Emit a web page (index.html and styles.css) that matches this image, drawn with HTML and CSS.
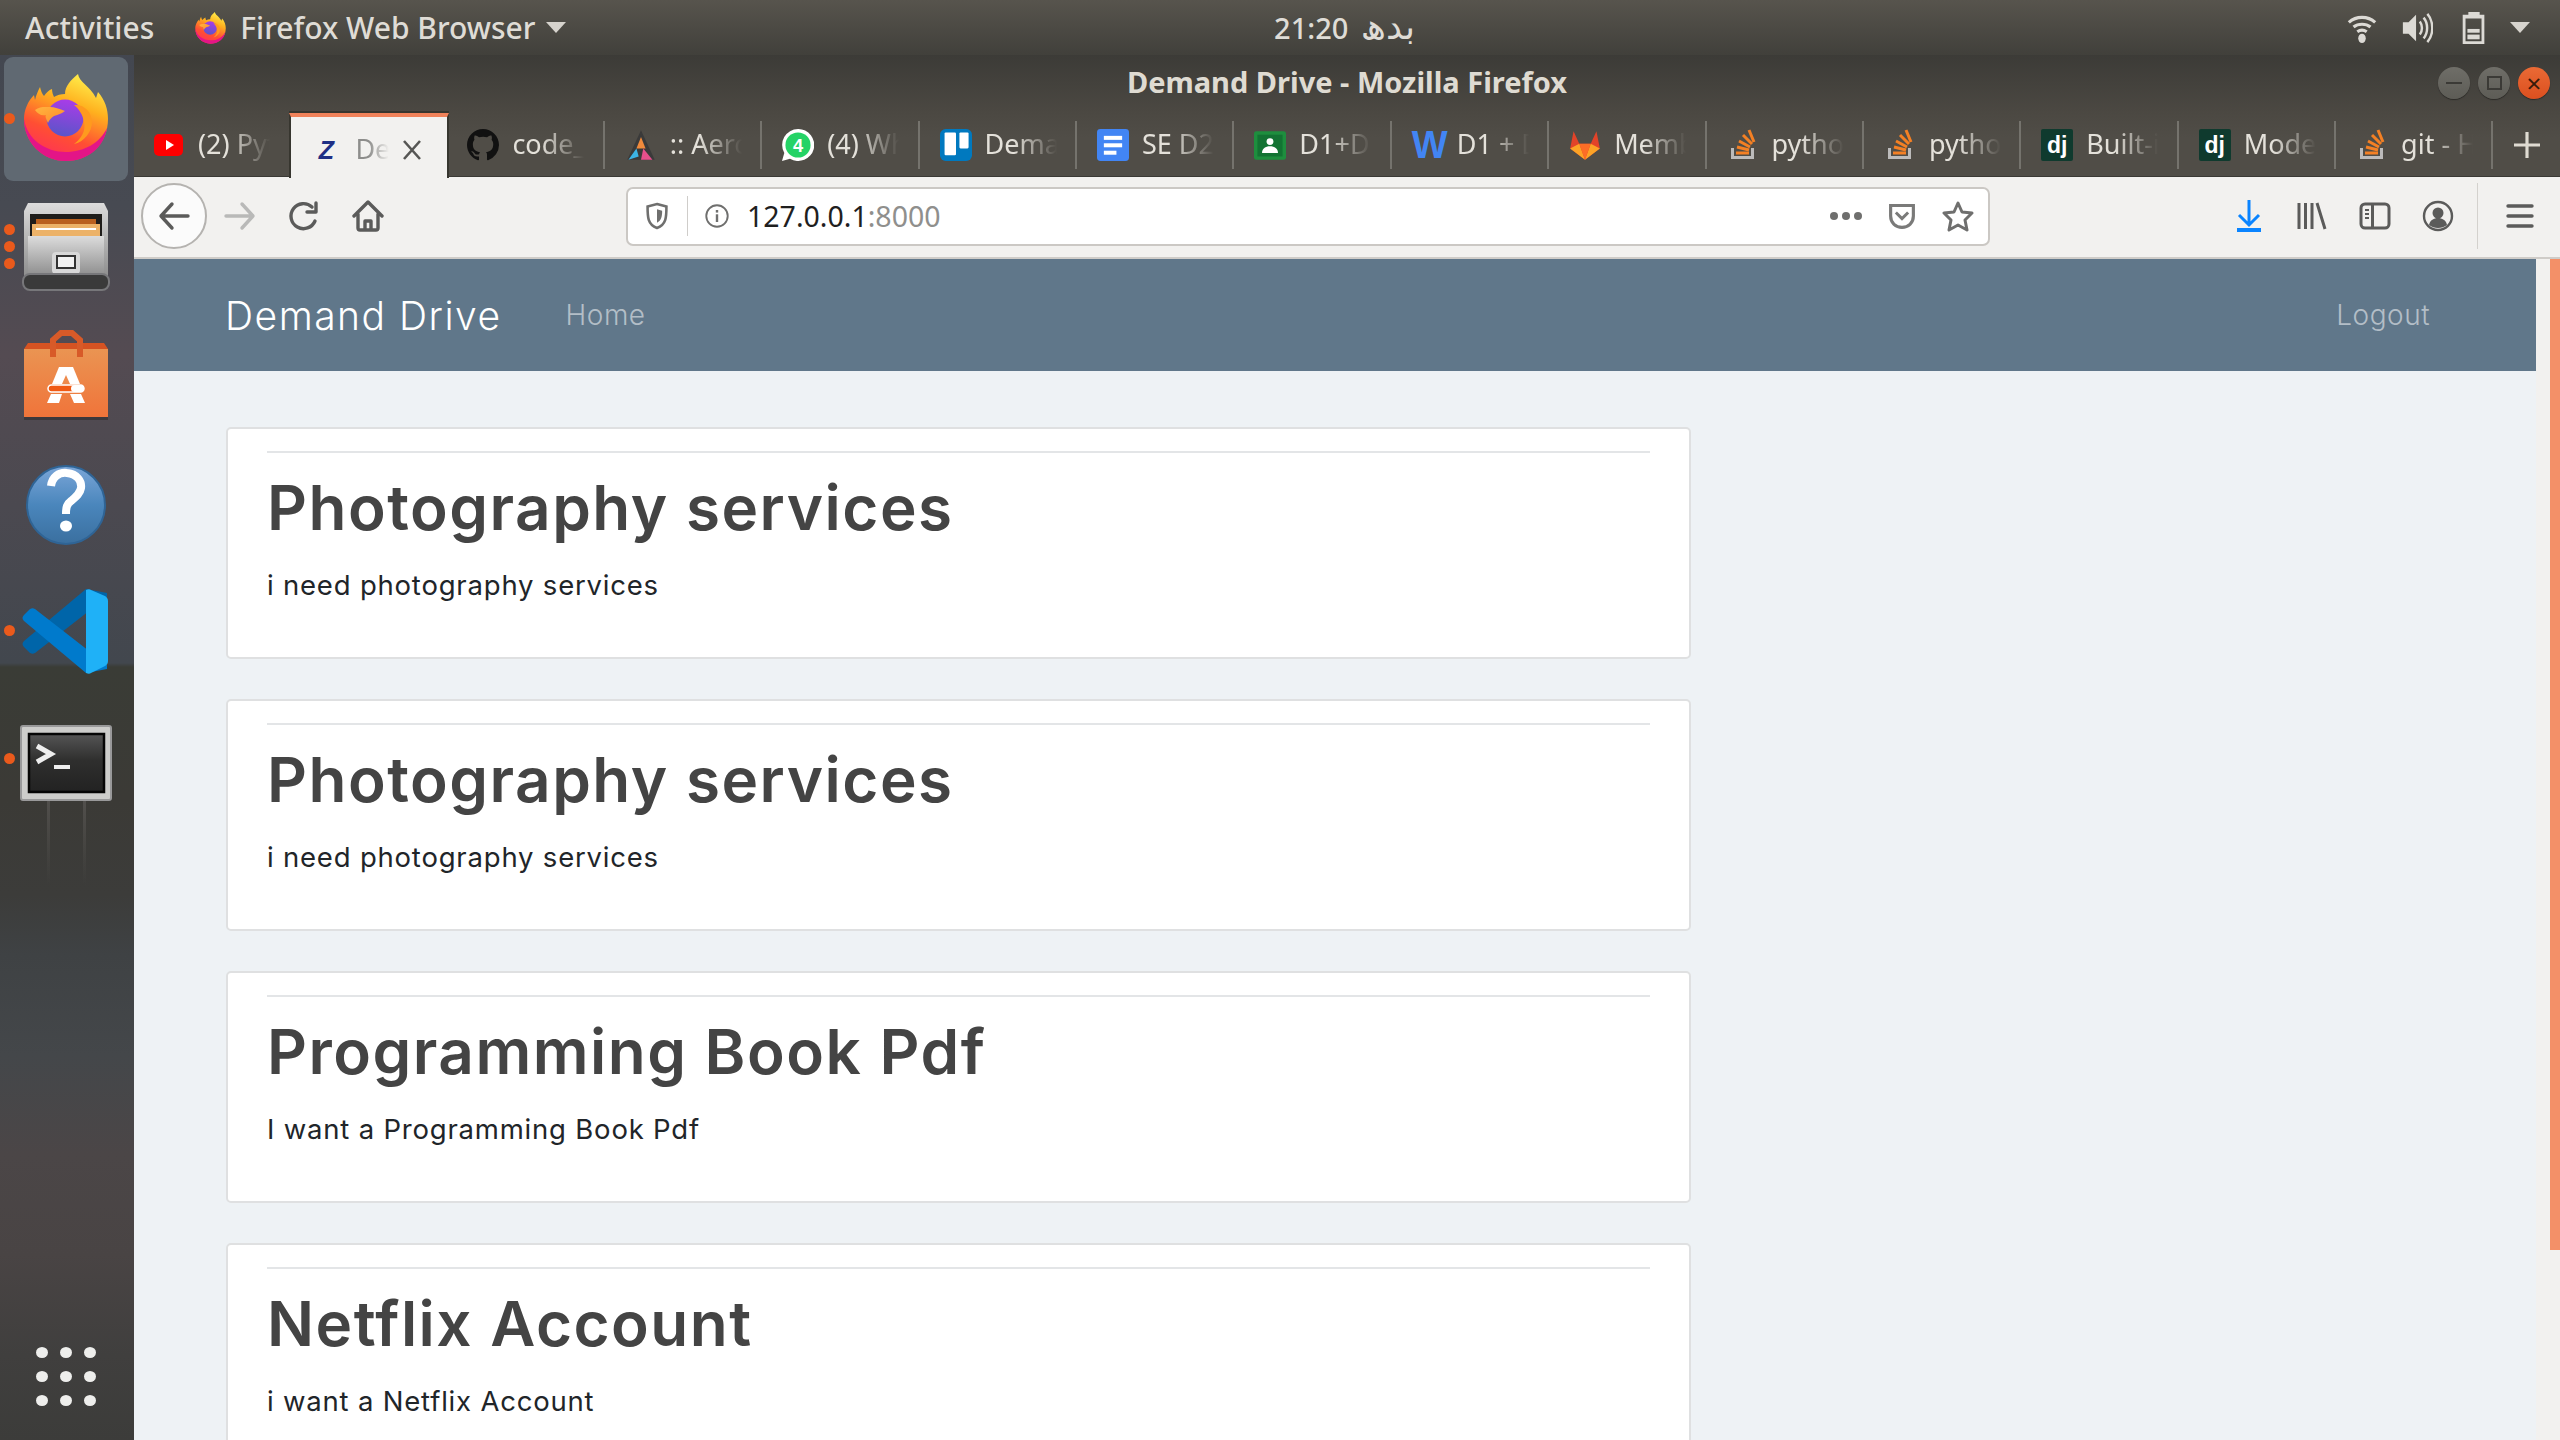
FILE: index.html
```html
<!DOCTYPE HTML>
<html>

<head>
    <meta charset="utf-8">
    <title>Demand Drive - Mozilla Firefox</title>
    <link rel="stylesheet" href="styles.css">
</head>

<body>
    <svg class="sprite" width="0" height="0">
        <defs>
            <linearGradient id="ffFlame" x1="0.75" y1="0" x2="0.35" y2="1">
                <stop offset="0" stop-color="#fff44f"/>
                <stop offset="0.35" stop-color="#ffb01e"/>
                <stop offset="0.7" stop-color="#ff4f33"/>
                <stop offset="1" stop-color="#ff3058"/>
            </linearGradient>
            <linearGradient id="ffGlobe" x1="0.6" y1="0" x2="0.4" y2="1">
                <stop offset="0" stop-color="#a93ce8"/>
                <stop offset="1" stop-color="#5a55c8"/>
            </linearGradient>
            <linearGradient id="ffFox" x1="0" y1="0" x2="1" y2="1">
                <stop offset="0" stop-color="#ffb53f"/>
                <stop offset="1" stop-color="#ff8a2a"/>
            </linearGradient>
            <symbol id="firefox" viewBox="0 0 84 88">
                <path fill="url(#ffFlame)" d="M54 0c1 8 12 12 18 24l2-6c7 8 10 17 10 27 0 25-19 42-42 42C18 87 0 68 0 45c0-9 4-18 10-24l1 5c1-5 3-9 5-13 1 4 2 7 4 9 2-3 5-6 8-7 0 3 1 6 2 8 3-2 7-3 11-3 0-8 6-14 13-20z"/>
                <path fill="#e31587" d="M0 45c3 20 21 33 42 33 18 0 34-9 41-24-3 20-20 33-41 33C18 87 0 68 0 45z"/>
                <circle fill="url(#ffGlobe)" cx="41" cy="44" r="18.500"/>
                <path fill="url(#ffFox)" d="M11 36c5-4 11-3 15-3 4 0 10 2 15 4-4 3-8 4-11 5-3 2-5 4-6 7-2-4-3-7-2-8-5 1-8-1-11-5z"/>
                <path fill="#ff9a1e" d="M50 31c10-1 18 7 18 17 0 10-8 20-18 22 8-6 12-14 10-22-1-7-5-13-10-17z"/>
            </symbol>
            <symbol id="stack" viewBox="0 0 32 32">
                <path fill="#bcbbbb" d="M4 19h3v8h17v-8h3v11H4z"/>
                <g stroke="#f48024" stroke-width="3" fill="none">
                    <path d="M9 24h13"/>
                    <path d="M10 18l12 3"/>
                    <path d="M12 12l11 6"/>
                    <path d="M16 6l9 9"/>
                    <path d="M22 1l5 12"/>
                </g>
            </symbol>
        </defs>
    </svg>

    <div class="topbar">
        <div class="topLeft">
            <span class="activities">Activities</span>
            <svg class="topFox"><use href="#firefox"/></svg>
            <span>Firefox Web Browser</span>
            <span class="caret"></span>
        </div>
        <div class="clock">21:20 <span class="urdu">بدھ</span></div>
        <div class="topRight">
            <svg class="trayIcon" viewBox="0 0 34 34">
                <g fill="none" stroke="#dcdad5" stroke-width="3.4">
                    <path d="M3 11c8-7 20-7 28 0"/>
                    <path d="M8 16c5-4 13-4 18 0"/>
                    <path d="M12 21c3-2 7-2 10 0"/>
                </g>
                <ellipse cx="17" cy="28" rx="4" ry="5" fill="#dcdad5"/>
            </svg>
            <svg class="trayIcon" viewBox="0 0 34 34">
                <path fill="#dcdad5" d="M2 11h6l8-8v28l-8-8H2z"/>
                <g fill="none" stroke="#dcdad5" stroke-width="2.6">
                    <path d="M20 10c3 4 3 10 0 14"/>
                    <path d="M24 6c5 6 5 16 0 22"/>
                    <path d="M28 2c7 8 7 22 0 30"/>
                </g>
            </svg>
            <svg class="trayIcon battery" viewBox="0 0 34 34">
                <path fill="#dcdad5" d="M11 0h12v3h5v31H5V3h6zM8 7v24h17V7z"/>
                <rect x="10" y="18" width="13" height="4" fill="#dcdad5"/>
                <rect x="10" y="24" width="13" height="5" fill="#dcdad5"/>
            </svg>
            <span class="caret"></span>
        </div>
    </div>

    <div class="desktop">
        <div class="dock">
            <div class="dockItem active">
                <i class="dot"></i>
                <svg class="dockIcon" viewBox="0 0 124 124"><use href="#firefox" x="20" y="17" width="84" height="88"/></svg>
            </div>
            <div class="dockItem files">
                <i class="dot one"></i><i class="dot two"></i><i class="dot three"></i>
                <svg class="dockIcon" viewBox="0 0 124 124">
                    <defs>
                        <linearGradient id="cab" x1="0" y1="0" x2="0" y2="1">
                            <stop offset="0" stop-color="#dcdcdc"/>
                            <stop offset="1" stop-color="#8d8d8d"/>
                        </linearGradient>
                    </defs>
                    <path fill="url(#cab)" d="M24 17h76l4 8v66H20V25z"/>
                    <rect x="26" y="28" width="72" height="26" fill="#1f1d1b"/>
                    <rect x="32" y="33" width="60" height="20" fill="#b9601f"/>
                    <rect x="28" y="38" width="68" height="15" fill="#ecb268"/>
                    <rect x="32" y="42" width="60" height="2" fill="#fff"/>
                    <rect x="24" y="50" width="76" height="40" fill="url(#cab)"/>
                    <rect x="48" y="66" width="28" height="22" rx="4" fill="#d8d8d8"/>
                    <rect x="53" y="70" width="18" height="12" fill="#f2f2f2" stroke="#333" stroke-width="2"/>
                    <rect x="19" y="88" width="86" height="16" rx="7" fill="#3a3a3a" stroke="#77777a" stroke-width="2"/>
                </svg>
            </div>
            <div class="dockItem">
                <svg class="dockIcon" viewBox="0 0 124 124">
                    <defs>
                        <linearGradient id="bag" x1="0" y1="0" x2="0" y2="1">
                            <stop offset="0" stop-color="#ea9452"/>
                            <stop offset="1" stop-color="#f0743a"/>
                        </linearGradient>
                    </defs>
                    <path fill="#d65322" d="M24 28h76l4 6H20z"/>
                    <path fill="none" stroke="#d85a28" stroke-width="6" d="M49 42V25l8-7h11l8 7v17"/>
                    <path fill="url(#bag)" d="M20 34h84v68H20z"/>
                    <path fill="#d85a28" d="M46 30h6v12h-6zM73 30h6v12h-6z"/>
                    <path fill="#fff" d="M55 52h14l7 17H48z"/>
                    <path fill="#ee8a4c" d="M62 60l4 9h-8z"/>
                    <rect x="44" y="70" width="36" height="7" rx="3.500" fill="#f05a14" stroke="#fff" stroke-width="1.500"/>
                    <rect x="67" y="70" width="13" height="7" rx="3.500" fill="#fff"/>
                    <path fill="#fff" d="M47 79h11l-3 9H43zM66 79h11l4 9H70z"/>
                    <rect x="20" y="102" width="84" height="3" fill="#2a2625" opacity="0.5"/>
                </svg>
            </div>
            <div class="dockItem">
                <svg class="dockIcon" viewBox="0 0 124 124">
                    <defs>
                        <linearGradient id="help" x1="0" y1="0" x2="0" y2="1">
                            <stop offset="0" stop-color="#7ba6d8"/>
                            <stop offset="0.5" stop-color="#4a86bc"/>
                            <stop offset="1" stop-color="#3a6f9f"/>
                        </linearGradient>
                    </defs>
                    <circle cx="62" cy="61" r="39" fill="url(#help)" stroke="#2f6495" stroke-width="2"/>
                    <path fill="none" stroke="#fff" stroke-width="8" d="M47 42c1-9 8-14 16-13 10 1 15 8 14 15-1 6-5 9-10 13-4 3-5 6-5 13"/>
                    <ellipse cx="62" cy="82" rx="6" ry="5.500" fill="#fff"/>
                </svg>
            </div>
            <div class="dockItem code">
                <i class="dot"></i>
                <svg class="dockIcon" viewBox="0 0 124 124">
                    <path fill="#0065a9" d="M82 16L20 68c-2 2-2 4 0 6l6 6c2 1 3 1 5 0l72-56v-4z"/>
                    <path fill="#007acc" d="M82 100L20 48c-2-2-2-4 0-6l6-6c2-1 3-1 5 0l72 56v4z"/>
                    <path fill="#1fb1f7" d="M82 100c2 1 4 1 5 0l14-7c2-1 3-3 3-5V28c0-2-1-4-3-5l-14-6c-1-1-3-1-5 0z"/>
                </svg>
            </div>
            <div class="dockItem term">
                <i class="dot"></i>
                <svg class="dockIcon" viewBox="0 0 124 124">
                    <defs>
                        <linearGradient id="termBg" x1="0" y1="0" x2="0" y2="1">
                            <stop offset="0" stop-color="#555"/>
                            <stop offset="0.45" stop-color="#2f2f2e"/>
                            <stop offset="1" stop-color="#222"/>
                        </linearGradient>
                    </defs>
                    <rect x="17" y="24" width="90" height="74" rx="2" fill="#cdcdcb" stroke="#99999a" stroke-width="2"/>
                    <rect x="25" y="32" width="75" height="58" fill="url(#termBg)" stroke="#050505" stroke-width="2.500"/>
                    <path fill="none" stroke="#eee" stroke-width="5" d="M33 44l14 8-14 8"/>
                    <rect x="50" y="63" width="16" height="4" fill="#eee"/>
                </svg>
            </div>
            <div class="appGrid">
                <i></i><i></i><i></i><i></i><i></i><i></i><i></i><i></i><i></i>
            </div>
        </div>

        <div class="window">
            <div class="titlebar">
                <span class="windowTitle">Demand Drive - Mozilla Firefox</span>
                <div class="windowButtons">
                    <span class="winBtn"><b class="minBar"></b></span>
                    <span class="winBtn"><b class="maxBox"></b></span>
                    <span class="winBtn close">×</span>
                </div>
            </div>

            <div class="tabStrip">
                <div class="tab first">
                    <svg class="favicon" viewBox="0 0 32 32"><rect x="1" y="5" width="29" height="22" rx="5" fill="#f00"/><path fill="#fff" d="M13 11l8 5-8 5z"/></svg>
                    <span class="tabText">(2) Python</span>
                </div>
                <div class="tab current">
                    <span class="zIcon">Z</span>
                    <span class="tabText short">Demand</span>
                    <svg class="tabClose" viewBox="0 0 20 20"><path fill="none" stroke="#565654" stroke-width="2.600" d="M2 1l16 18M18 1L2 19"/></svg>
                </div>
                <div class="tab">
                    <svg class="favicon" viewBox="0 0 16 16"><path fill="#111" d="M8 0C3.58 0 0 3.58 0 8c0 3.54 2.29 6.53 5.47 7.59.4.07.55-.17.55-.38 0-.19-.01-.82-.01-1.49-2.01.37-2.53-.49-2.69-.94-.09-.23-.48-.94-.82-1.13-.28-.15-.68-.52-.01-.53.63-.01 1.08.58 1.23.82.72 1.21 1.87.87 2.33.66.07-.52.28-.87.51-1.07-1.78-.2-3.64-.89-3.64-3.95 0-.87.31-1.59.82-2.15-.08-.2-.36-1.02.08-2.12 0 0 .67-.21 2.2.82.64-.18 1.32-.27 2-.27.68 0 1.36.09 2 .27 1.53-1.04 2.2-.82 2.2-.82.44 1.1.16 1.92.08 2.12.51.56.82 1.27.82 2.15 0 3.07-1.87 3.75-3.65 3.95.29.25.54.73.54 1.48 0 1.07-.01 1.93-.01 2.2 0 .21.15.46.55.38A8.013 8.013 0 0016 8c0-4.42-3.58-8-8-8z"/></svg>
                    <span class="tabText">code_server</span>
                </div>
                <div class="tab">
                    <svg class="favicon" viewBox="0 0 28 28"><path fill="#3a3a3a" d="M14 1l12 26H2z"/><path fill="#f08a3c" d="M14 7l4 10h-8z"/><path fill="#3cb4e6" d="M10 17l-7 10 9-3z"/><path fill="#e84f8c" d="M16 17l8 10H14z"/></svg>
                    <span class="tabText">:: Aero</span>
                </div>
                <div class="tab">
                    <svg class="favicon" viewBox="0 0 28 28"><path fill="#fff" d="M14 0a14 14 0 1 1-7 26l-7 2 2-7A14 14 0 0 1 14 0z"/><circle cx="14" cy="14" r="11" fill="#25d366"/><text x="14" y="20" class="waNum">4</text></svg>
                    <span class="tabText">(4) WhatsApp</span>
                </div>
                <div class="tab">
                    <svg class="favicon" viewBox="0 0 28 28"><rect width="28" height="28" rx="5" fill="#0079bf"/><rect x="4" y="3" width="10" height="20" rx="1" fill="#fff"/><rect x="17" y="3" width="8" height="14" rx="1" fill="#fff"/></svg>
                    <span class="tabText">Demand</span>
                </div>
                <div class="tab">
                    <svg class="favicon" viewBox="0 0 28 28"><rect width="28" height="28" rx="3" fill="#4285f4"/><rect x="6" y="6" width="16" height="3.500" fill="#fff"/><rect x="6" y="12.500" width="16" height="3.500" fill="#fff"/><rect x="6" y="19" width="11" height="3.500" fill="#fff"/></svg>
                    <span class="tabText">SE D2 Report</span>
                </div>
                <div class="tab">
                    <svg class="favicon" viewBox="0 0 28 28"><rect y="2" width="28" height="25" rx="2" fill="#1e8e3e"/><rect x="3" y="5" width="22" height="19" fill="#137333"/><circle cx="14" cy="11" r="3" fill="#fff"/><path fill="#fff" d="M7 21c0-4 3-6 7-6s7 2 7 6z"/></svg>
                    <span class="tabText">D1+D2 Class</span>
                </div>
                <div class="tab">
                    <span class="wIcon">W</span>
                    <span class="tabText">D1 + D2 Doc</span>
                </div>
                <div class="tab">
                    <svg class="favicon" viewBox="0 0 28 28"><path fill="#e24329" d="M14 27L1 17 4 2l5 11h10l5-11 3 15z"/><path fill="#fca326" d="M1 17l13 10-5-14zM27 17L14 27l5-14z"/><path fill="#fc6d26" d="M9 13h10l-5 14z"/></svg>
                    <span class="tabText">Members</span>
                </div>
                <div class="tab">
                    <svg class="favicon"><use href="#stack"/></svg>
                    <span class="tabText">python -</span>
                </div>
                <div class="tab">
                    <svg class="favicon"><use href="#stack"/></svg>
                    <span class="tabText">python -</span>
                </div>
                <div class="tab">
                    <span class="djIcon">dj</span>
                    <span class="tabText">Built-in</span>
                </div>
                <div class="tab">
                    <span class="djIcon">dj</span>
                    <span class="tabText">Models</span>
                </div>
                <div class="tab">
                    <svg class="favicon"><use href="#stack"/></svg>
                    <span class="tabText">git - How</span>
                </div>
                <svg class="newTab" viewBox="0 0 28 28"><path fill="none" stroke="#dfdbd2" stroke-width="3.400" d="M14 0v28M0 14h28"/></svg>
            </div>

            <div class="toolbar">
                <span class="backBtn">
                    <svg class="tool" viewBox="0 0 32 32"><path fill="none" stroke="#5b5b5a" stroke-width="3.400" stroke-linecap="round" stroke-linejoin="round" d="M30 16H3M14 4L3 16l11 12"/></svg>
                </span>
                <svg class="tool forward" viewBox="0 0 32 32"><path fill="none" stroke="#b9b9b8" stroke-width="3.400" stroke-linecap="round" stroke-linejoin="round" d="M2 16h27M18 4l11 12-11 12"/></svg>
                <svg class="tool reload" viewBox="0 0 32 32"><path fill="none" stroke="#5b5b5a" stroke-width="3.400" stroke-linecap="round" stroke-linejoin="round" d="M27 21A12.500 12.500 0 1 1 24 7M28 3v9H19"/></svg>
                <svg class="tool home" viewBox="0 0 32 32"><path fill="none" stroke="#5b5b5a" stroke-width="3.400" stroke-linecap="round" stroke-linejoin="round" d="M2 16L16 2l14 14M6 14v14a2 2 0 0 0 2 2h16a2 2 0 0 0 2-2V14M13 30v-9h6v9"/></svg>

                <div class="urlbar">
                    <svg class="urlIcon" viewBox="0 0 28 32"><path fill="none" stroke="#6f6f6e" stroke-width="3" d="M14 2l11 3c0 12 0 21-11 25C3 26 3 17 3 5z"/><path fill="#6f6f6e" d="M14 8l6 2c0 7-1 11-6 14z"/></svg>
                    <span class="urlSep"></span>
                    <svg class="urlIcon" viewBox="0 0 28 32"><circle cx="14" cy="16" r="12.500" fill="none" stroke="#6f6f6e" stroke-width="2.200"/><rect x="12.600" y="14" width="2.800" height="9" fill="#6f6f6e"/><rect x="12.600" y="9" width="2.800" height="3" fill="#6f6f6e"/></svg>
                    <span class="urlText">127.0.0.1<span class="urlPort">:8000</span></span>
                    <span class="urlDots"><i></i><i></i><i></i></span>
                    <svg class="urlIcon pocket" viewBox="0 0 32 32"><path fill="none" stroke="#7a7a79" stroke-width="3.600" d="M3 4h26v12c0 8-6 13-13 13S3 24 3 16z"/><path fill="none" stroke="#7a7a79" stroke-width="3.400" d="M9 12l7 7 7-7"/></svg>
                    <svg class="urlIcon star" viewBox="0 0 32 32"><path fill="none" stroke="#6f6f6e" stroke-width="3" stroke-linejoin="round" d="M16 3l4 9 10 1-7 7 2 10-9-5-9 5 2-10-7-7 10-1z"/></svg>
                </div>

                <div class="toolRight">
                    <svg class="tool" viewBox="0 0 32 32"><path fill="none" stroke="#0a84ff" stroke-width="3" d="M16 0v24M6 15l10 10 10-10"/><rect x="4" y="28" width="24" height="4" fill="#0a84ff"/></svg>
                    <svg class="tool" viewBox="0 0 32 32"><path fill="none" stroke="#5b5b5a" stroke-width="3" d="M3 3v26M9.500 3v26M16 3v26M21 3l8 26"/></svg>
                    <svg class="tool" viewBox="0 0 32 32"><rect x="2" y="4" width="28" height="24" rx="4" fill="none" stroke="#5b5b5a" stroke-width="3"/><path fill="#5b5b5a" d="M12 4h3v24h-3zM6 9h4v2H6zM6 13h4v2H6zM6 17h4v2H6z"/></svg>
                    <svg class="tool" viewBox="0 0 32 32"><circle cx="16" cy="16" r="14" fill="none" stroke="#5b5b5a" stroke-width="2.400"/><circle cx="16" cy="13" r="5.500" fill="#5b5b5a"/><path fill="#5b5b5a" d="M7 25c1-5 5-7 9-7s8 2 9 7c-5 4-13 4-18 0z"/></svg>
                    <span class="toolSep"></span>
                    <svg class="tool menu" viewBox="0 0 32 32"><path fill="none" stroke="#5b5b5a" stroke-width="3.400" stroke-linecap="round" d="M4 6h24M4 16h24M4 26h24"/></svg>
                </div>
            </div>

            <div class="page">
                <div class="pageBody">
                    <div class="navbar">
                        <span class="brand">Demand Drive</span>
                        <a class="navLink">Home</a>
                        <a class="navLink logout">Logout</a>
                    </div>
                    <div class="content">
                        <div class="card">
                            <hr>
                            <h1>Photography services</h1>
                            <p>i need photography services</p>
                        </div>
                        <div class="card">
                            <hr>
                            <h1>Photography services</h1>
                            <p>i need photography services</p>
                        </div>
                        <div class="card">
                            <hr>
                            <h1>Programming Book Pdf</h1>
                            <p>I want a Programming Book Pdf</p>
                        </div>
                        <div class="card">
                            <hr>
                            <h1>Netflix Account</h1>
                            <p>i want a Netflix Account</p>
                        </div>
                    </div>
                </div>
                <div class="scrollbar"><div class="thumb"></div></div>
            </div>
        </div>
    </div>
</body>

</html>
```

FILE: styles.css
```css
* {
    box-sizing: border-box;
}

html,
body {
    margin: 0;
    height: 100%;
    overflow: hidden;
}

body {
    display: flex;
    flex-direction: column;
    font-family: "Noto Sans", sans-serif;
    background: #3b3b38;
}

.sprite {
    position: absolute;
}

/* ubuntu top bar */
.topbar {
    height: 55px;
    flex: none;
    display: grid;
    grid-template-columns: 1fr auto 1fr;
    align-items: center;
    padding: 0 30px 0 25px;
    background: linear-gradient(#57544d, #41403b);
    color: #dfdcd6;
    font-size: 30px;
    font-weight: 500;
}

.topLeft,
.topRight {
    display: flex;
    align-items: center;
}

.topRight {
    justify-content: flex-end;
    gap: 23px;
}

.activities {
    margin-right: 41px;
}

.topFox {
    width: 31px;
    height: 32px;
    margin-right: 14px;
}

.caret {
    width: 0;
    height: 0;
    margin-left: 11px;
    border-left: 10px solid transparent;
    border-right: 10px solid transparent;
    border-top: 11px solid #d6d3cd;
}

.topRight .caret {
    margin-left: -3px;
}

.clock {
    margin-left: 134px;
    font-size: 29px;
    line-height: 55px;
}

.urdu {
    font-family: "DejaVu Sans", sans-serif;
    font-size: 36px;
    line-height: 40px;
    margin-left: 5px;
}

.trayIcon {
    width: 32px;
    height: 34px;
}

.battery {
    margin-left: 2px;
}

.desktop {
    flex: 1;
    display: flex;
    min-height: 0;
}

/* launcher */
.dock {
    width: 134px;
    flex: none;
    display: flex;
    flex-direction: column;
    align-items: center;
    gap: 5px;
    padding: 2px 2px 0 0;
    background:
        linear-gradient(#514f4c, #514f4c00) 47px 745px / 3px 85px no-repeat,
        linear-gradient(#514f4c, #514f4c00) 83px 745px / 3px 85px no-repeat,
        linear-gradient(#434750 0, #474a52 150px, #544b52 300px, #4b4950 450px, #42474e 608px, #3a3c36 612px, #3b3a36 745px, #3c3c3a 840px, #3f4244 900px, #44474a 1000px, #4b4647 1100px, #494444 1200px, #403f3e 1300px, #3c3c3a 1385px);
}

.dockItem {
    position: relative;
    width: 124px;
    height: 124px;
    border-radius: 9px;
}

.dockItem.active {
    background: #606972;
}

.dockIcon {
    display: block;
    width: 124px;
    height: 124px;
}

.dot {
    position: absolute;
    left: 0;
    top: 56px;
    width: 11px;
    height: 11px;
    border-radius: 50%;
    background: #ea5a1c;
}

.files .dot.one {
    top: 38px;
}

.files .dot.two {
    top: 55px;
}

.files .dot.three {
    top: 72px;
}

.code .dot {
    top: 52px;
}

.term .dot {
    top: 51px;
}

.appGrid {
    display: grid;
    grid-template-columns: repeat(3, 12px);
    gap: 13px 12px;
    margin-top: auto;
    margin-bottom: 34px;
}

.appGrid i {
    width: 12px;
    height: 11px;
    border-radius: 50%;
    background: #eeeeec;
}

.window {
    flex: 1;
    min-width: 0;
    display: flex;
    flex-direction: column;
}

/* title bar */
.titlebar {
    height: 57px;
    flex: none;
    position: relative;
    display: flex;
    align-items: center;
    justify-content: center;
    background: linear-gradient(#3c3b37, #4b4842);
}

.windowTitle {
    margin-bottom: 4px;
    font-size: 29px;
    font-weight: 700;
    color: #dfdbd2;
}

.windowButtons {
    position: absolute;
    right: 10px;
    top: 12px;
    display: flex;
    gap: 8px;
}

.winBtn {
    width: 32px;
    height: 32px;
    border-radius: 50%;
    display: flex;
    align-items: center;
    justify-content: center;
    background: linear-gradient(#6f6e68, #5d5c56);
    box-shadow: 0 1px 1px #2b2a27;
    color: #3b3a36;
    font-size: 26px;
    line-height: 1;
}

.winBtn.close {
    background: linear-gradient(#ea6a35, #dc4f1f);
    color: #3a1a0a;
}

.minBar {
    width: 16px;
    height: 2px;
    background: #3b3a36;
}

.maxBox {
    width: 15px;
    height: 14px;
    border: 2px solid #3b3a36;
}

/* tabs */
.tabStrip {
    height: 65px;
    flex: none;
    display: flex;
    align-items: flex-start;
    background: linear-gradient(#4b4842, #504d47 40%);
    border-bottom: 1px solid #3a3935;
}

.tab {
    width: 157.400px;
    height: 48px;
    flex: none;
    margin-top: 9px;
    padding-left: 20px;
    display: flex;
    align-items: center;
    border-right: 2px solid #75736d;
    color: #e4e1da;
    font-size: 27px;
    white-space: nowrap;
}

.tab.first {
    width: 155.400px;
    padding-left: 19px;
    border-right-color: transparent;
}

.tab.current {
    position: relative;
    width: 160px;
    height: 65px;
    margin: 1px -2px 0 0;
    padding-top: 5px;
    padding-left: 25px;
    background: #f2f1ef;
    border: 2px solid #37362f;
    border-top: 4px solid #f0825a;
    border-bottom: none;
    box-shadow: 0 -2px 0 #37362f;
    color: #4a4a48;
}

.favicon {
    width: 32px;
    height: 32px;
    flex: none;
}

.tabText {
    width: 72px;
    margin: -3px 0 0 13px;
    overflow: hidden;
    -webkit-mask-image: linear-gradient(to right, #000 40%, transparent 100%);
    mask-image: linear-gradient(to right, #000 40%, transparent 100%);
}

.tabText.short {
    width: 34px;
    margin-left: 19px;
    color: #8d8d8b;
}

.tabClose {
    width: 20px;
    height: 20px;
    margin-left: 13px;
}

.zIcon {
    width: 20px;
    flex: none;
    font: italic 700 25px "Liberation Sans", sans-serif;
    color: #1f2f85;
    text-align: center;
}

.wIcon {
    width: 32px;
    flex: none;
    font: 700 38px "Liberation Sans", sans-serif;
    color: #4285f4;
    text-align: center;
    line-height: 32px;
    letter-spacing: -2px;
}

.djIcon {
    width: 32px;
    height: 32px;
    flex: none;
    background: #0f3a2e;
    border-radius: 2px;
    color: #fff;
    font: 700 23px "Liberation Sans", sans-serif;
    line-height: 32px;
    text-align: center;
}

.waNum {
    fill: #fff;
    font: 700 16px "Liberation Sans", sans-serif;
    text-anchor: middle;
}

.newTab {
    width: 26px;
    height: 26px;
    margin: 20px 0 0 21px;
}

/* toolbar */
.toolbar {
    height: 82px;
    flex: none;
    display: flex;
    align-items: center;
    padding: 0 0 2px 7px;
    background: #f2f1ef;
    border-bottom: 2px solid #cfccc8;
}

.tool {
    width: 32px;
    height: 32px;
    flex: none;
}

.backBtn {
    width: 66px;
    height: 66px;
    display: flex;
    align-items: center;
    justify-content: center;
    flex: none;
    border-radius: 50%;
    background: #fbfbfb;
    border: 2px solid #b5b3b0;
}

.forward {
    margin-left: 17px;
}

.reload {
    margin-left: 32px;
}

.home {
    margin-left: 32px;
}

.urlbar {
    width: 1364px;
    height: 59px;
    flex: none;
    margin-left: 242px;
    display: flex;
    align-items: center;
    padding: 0 14px 0 17px;
    background: #fff;
    border: 2px solid #cbc8c4;
    border-radius: 7px;
}

.urlIcon {
    width: 24px;
    height: 28px;
    flex: none;
}

.urlSep {
    width: 1px;
    height: 40px;
    margin: 0 17px 0 18px;
    background: #cfcdca;
}

.urlText {
    margin-left: 18px;
    font-size: 28.500px;
    color: #1f1f1f;
}

.urlPort {
    color: #8f8f8d;
}

.urlDots {
    display: flex;
    gap: 4px;
    margin-left: auto;
}

.urlDots i {
    width: 8px;
    height: 8px;
    border-radius: 50%;
    background: #6f6f6e;
}

.pocket {
    width: 30px;
    margin-left: 25px;
}

.star {
    width: 32px;
    height: 32px;
    margin-left: 25px;
}

.toolRight {
    flex: 1;
    display: flex;
    align-items: center;
    padding-left: 243px;
    gap: 31px;
}

.toolSep {
    width: 1px;
    height: 66px;
    margin-left: -8px;
    background: #d3d1cd;
}

.menu {
    margin-left: -5px;
}

/* page */
.page {
    flex: 1;
    min-height: 0;
    display: flex;
    background: #eef2f5;
}

.pageBody {
    flex: 1;
    min-width: 0;
    overflow: hidden;
}

.navbar {
    height: 112px;
    display: flex;
    align-items: center;
    padding: 0 106px 0 91px;
    background: #60778a;
    font-family: Inter, sans-serif;
}

.brand {
    margin-right: 64px;
    font-size: 39px;
    font-weight: 300;
    letter-spacing: 1.500px;
    color: #fff;
}

.navLink {
    font-size: 28px;
    font-weight: 300;
    letter-spacing: 0.500px;
    color: #b3bec7;
}

.logout {
    margin-left: auto;
}

.content {
    padding: 56px 0 0 92px;
}

.card {
    width: 1465px;
    height: 232px;
    margin-bottom: 40px;
    padding: 22px 39px 0;
    background: #fff;
    border: 2px solid #dfe0e1;
    border-radius: 5px;
    font-family: Inter, sans-serif;
}

.card hr {
    height: 2px;
    margin: 0;
    border: none;
    background: #e3e5e7;
}

.card h1 {
    margin: 19px 0 0;
    font-size: 62px;
    line-height: 72px;
    font-weight: 600;
    letter-spacing: 1.500px;
    color: #444;
}

.card p {
    margin: 21px 0 0;
    font-size: 27.500px;
    line-height: 40px;
    font-weight: 400;
    letter-spacing: 0.800px;
    color: #212529;
}

.scrollbar {
    width: 24px;
    flex: none;
    padding-left: 14px;
    background: #f2f1ef;
}

.thumb {
    height: 991px;
    background: #f39068;
}
```
